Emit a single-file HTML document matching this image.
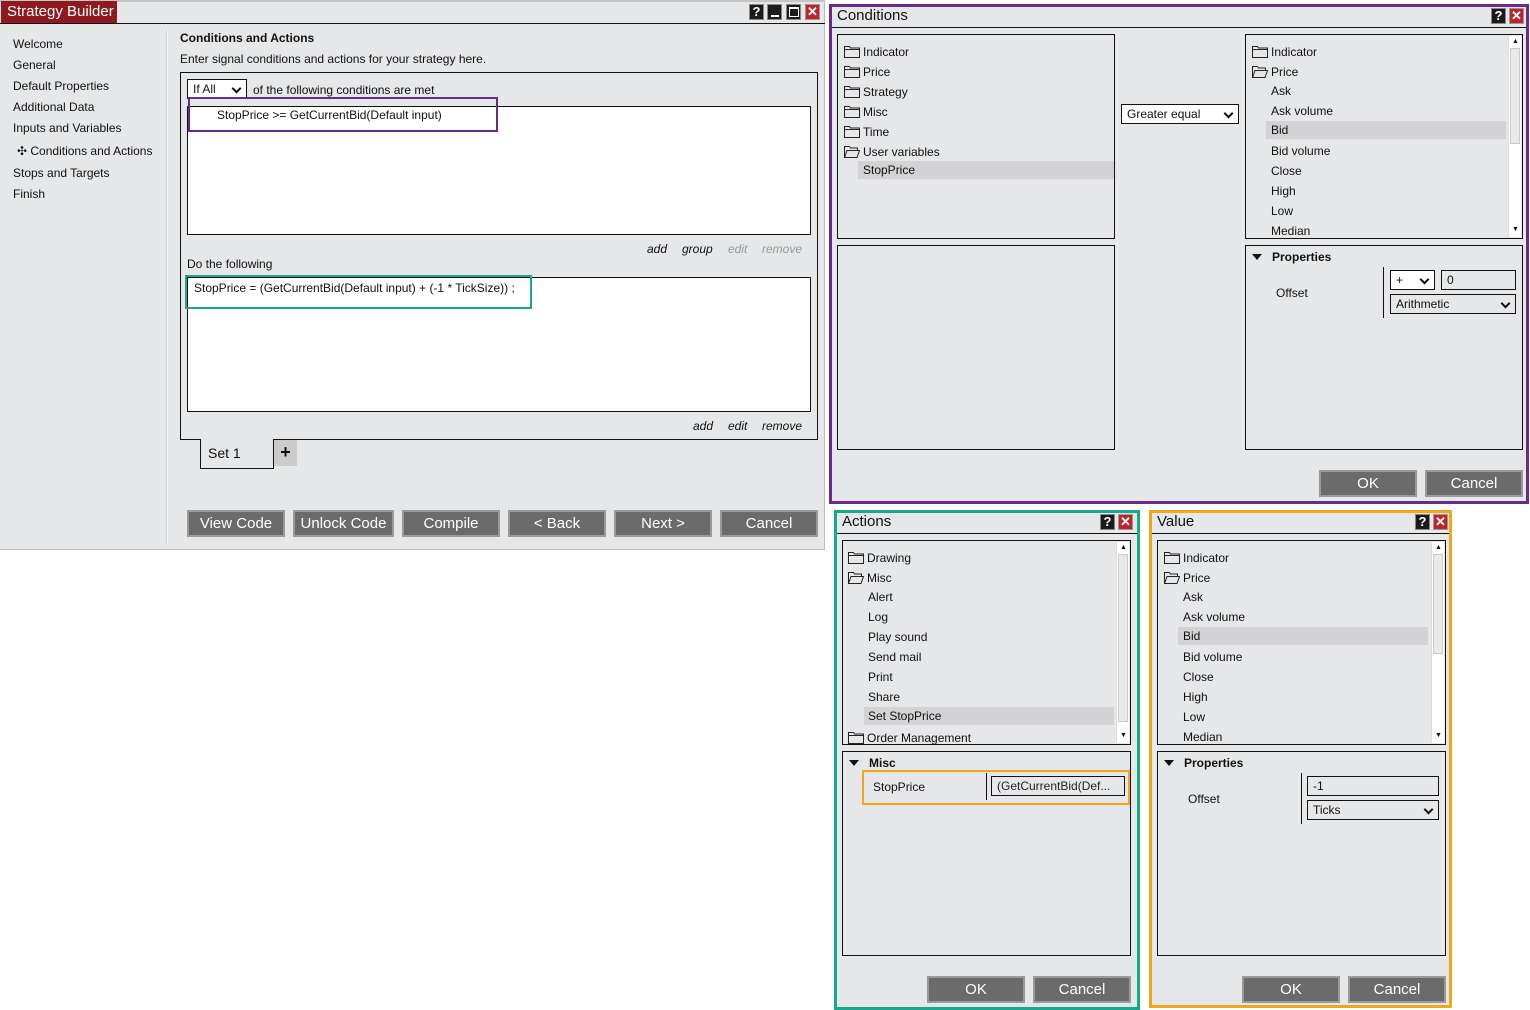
<!DOCTYPE html>
<html><head><meta charset="utf-8"><style>
*{box-sizing:border-box;margin:0;padding:0}
body{width:1530px;height:1010px;background:#fff;position:relative;overflow:hidden;font-family:"Liberation Sans",Arial,sans-serif;font-size:12px;color:#111}
.a{position:absolute}
.bg{background:#e6e7e9}
.box{position:absolute;border:1px solid #111}
.wbox{position:absolute;border:1px solid #111;background:#fff}
.btn{position:absolute;background:#6b6b6b;border:2px solid #9a9a9a;color:#fff;font-size:15px;text-align:center;line-height:23px;height:27px}
.ib{position:absolute;width:15px;height:16px;background:#1b1b1b;border:1px solid #888;color:#fff;font-weight:bold;font-size:13px;text-align:center;line-height:14px}
.ix{background:#c0242b;border-color:#999}
.row{position:absolute;height:18px;line-height:18px;white-space:nowrap}
.sel{background:#d3d3d5}
.fd{display:inline-block;width:16px;height:13px;margin-right:3px;vertical-align:-2px}
.sb{position:absolute;width:13px;background:#fff}
.dd{position:absolute;border:1px solid #111;background:#fff;padding-left:5px;line-height:18px;height:20px;font-size:12px}
.dd:after{content:"";position:absolute;right:6px;top:5px;width:5px;height:5px;border-right:2px solid #111;border-bottom:2px solid #111;transform:rotate(45deg)}
.nodd:after{display:none}
.tri{display:inline-block;width:0;height:0;border-left:5px solid transparent;border-right:5px solid transparent;border-top:6px solid #111;margin-right:10px;vertical-align:1px}
.it{font-style:italic}
</style></head><body>
<svg width="0" height="0" style="position:absolute"><defs>
<symbol id="f" viewBox="0 0 16 13"><path d="M0.5 12.5V1.5H5.5L6.5 3H15.5V12.5Z M0.5 4.5H15.5" fill="none" stroke="#222" stroke-width="1"/></symbol>
<symbol id="fo" viewBox="0 0 16 13"><path d="M0.5 12.5V1.5H5.5L6.5 3H13.5V5.5 M0.5 12.5L3 5.5H15.5L13 12.5Z" fill="none" stroke="#222" stroke-width="1"/></symbol>
</defs></svg>

<!-- MAIN WINDOW -->
<div class="a bg" style="left:0;top:0;width:825px;height:550px;border-right:1px solid #bbb;border-bottom:1px solid #bbb"></div>
<div class="a" style="left:0;top:0;width:825px;height:2px;background:#c5c5c5"></div>
<div class="a" style="left:1px;top:1px;width:116px;height:22px;background:#8e1a1f;color:#fff;font-size:15px;line-height:21px;padding-left:6px">Strategy Builder</div>
<div class="a" style="left:0;top:23px;width:825px;height:1px;background:#111"></div>
<div class="ib" style="left:749px;top:4px">?</div>
<div class="ib" style="left:767px;top:4px"><div class="a" style="left:3px;top:10px;width:8px;height:2px;background:#fff"></div></div>
<div class="ib" style="left:786px;top:4px"><div class="a" style="left:2px;top:2px;width:10px;height:10px;border:1px solid #fff;border-top-width:2px"></div></div>
<div class="ib ix" style="left:805px;top:4px">✕</div>

<div class="a" style="left:166px;top:30px;width:2px;height:514px;background:#f4f4f4;border-left:1px solid #d0d0d0"></div>
<div class="row" style="left:13px;top:35px">Welcome</div>
<div class="row" style="left:13px;top:56px">General</div>
<div class="row" style="left:13px;top:77px">Default Properties</div>
<div class="row" style="left:13px;top:98px">Additional Data</div>
<div class="row" style="left:13px;top:119px">Inputs and Variables</div>
<div class="row" style="left:17px;top:142px">✣ Conditions and Actions</div>
<div class="row" style="left:13px;top:164px">Stops and Targets</div>
<div class="row" style="left:13px;top:185px">Finish</div>

<div class="row" style="left:180px;top:29px;font-weight:bold">Conditions and Actions</div>
<div class="row" style="left:180px;top:50px">Enter signal conditions and actions for your strategy here.</div>

<div class="box" style="left:180px;top:72px;width:638px;height:368px"></div>
<div class="dd" style="left:187px;top:79px;width:60px">If All</div>
<div class="row" style="left:253px;top:81px">of the following conditions are met</div>
<div class="wbox" style="left:187px;top:106px;width:624px;height:129px"></div>
<div class="a" style="left:188px;top:97px;width:310px;height:35px;border:2px solid #6a2a8c"></div>
<div class="row" style="left:217px;top:106px">StopPrice &gt;= GetCurrentBid(Default input)</div>
<div class="row it" style="left:647px;top:240px">add</div>
<div class="row it" style="left:682px;top:240px">group</div>
<div class="row it" style="left:728px;top:240px;color:#999">edit</div>
<div class="row it" style="left:762px;top:240px;color:#999">remove</div>
<div class="row" style="left:187px;top:255px">Do the following</div>
<div class="wbox" style="left:187px;top:277px;width:624px;height:135px"></div>
<div class="a" style="left:185px;top:275px;width:347px;height:34px;border:2px solid #17a88e"></div>
<div class="row" style="left:194px;top:279px">StopPrice = (GetCurrentBid(Default input) + (-1 * TickSize)) ;</div>
<div class="row it" style="left:693px;top:417px">add</div>
<div class="row it" style="left:728px;top:417px">edit</div>
<div class="row it" style="left:762px;top:417px">remove</div>
<div class="a bg" style="left:200px;top:439px;width:74px;height:30px;border:1px solid #111;border-top:none;font-size:14px;padding:6px 0 0 7px">Set 1</div>
<div class="a" style="left:274px;top:440px;width:23px;height:26px;background:#ccc;font-size:18px;font-weight:bold;text-align:center;line-height:25px">+</div>

<div class="btn" style="left:187px;top:510px;width:98px">View Code</div>
<div class="btn" style="left:293px;top:510px;width:101px">Unlock Code</div>
<div class="btn" style="left:402px;top:510px;width:98px">Compile</div>
<div class="btn" style="left:508px;top:510px;width:98px">&lt; Back</div>
<div class="btn" style="left:614px;top:510px;width:98px">Next &gt;</div>
<div class="btn" style="left:720px;top:510px;width:98px">Cancel</div>

<!-- CONDITIONS WINDOW -->
<div class="a bg" style="left:829px;top:4px;width:700px;height:500px;border:3px solid #6a2a8c"></div>
<div class="row" style="left:837px;top:7px;font-size:15px">Conditions</div>
<div class="a" style="left:832px;top:27px;width:694px;height:1px;background:#111"></div>
<div class="ib" style="left:1491px;top:8px">?</div>
<div class="ib ix" style="left:1509px;top:8px">✕</div>

<div class="box" style="left:837px;top:34px;width:278px;height:205px"></div>
<div class="row" style="left:844px;top:43px"><svg class="fd"><use href="#f"/></svg>Indicator</div>
<div class="row" style="left:844px;top:63px"><svg class="fd"><use href="#f"/></svg>Price</div>
<div class="row" style="left:844px;top:83px"><svg class="fd"><use href="#f"/></svg>Strategy</div>
<div class="row" style="left:844px;top:103px"><svg class="fd"><use href="#f"/></svg>Misc</div>
<div class="row" style="left:844px;top:123px"><svg class="fd"><use href="#f"/></svg>Time</div>
<div class="row" style="left:844px;top:143px"><svg class="fd"><use href="#fo"/></svg>User variables</div>
<div class="row sel" style="left:858px;top:161px;width:256px;padding-left:5px">StopPrice</div>
<div class="box" style="left:837px;top:245px;width:278px;height:205px"></div>
<div class="dd" style="left:1121px;top:104px;width:118px">Greater equal</div>

<div class="box" style="left:1245px;top:34px;width:278px;height:205px"></div>
<div class="sb" style="left:1508px;top:36px;height:201px;border-left:1px solid #ddd"><div class="a" style="left:3px;top:2px;font-size:7px">▲</div><div class="a" style="left:3px;top:190px;font-size:7px">▼</div><div class="a" style="left:1px;top:12px;width:10px;height:96px;background:#e9e9e9;border:1px solid #ccc"></div></div>
<div class="row" style="left:1252px;top:43px"><svg class="fd"><use href="#f"/></svg>Indicator</div>
<div class="row" style="left:1252px;top:63px"><svg class="fd"><use href="#fo"/></svg>Price</div>
<div class="row" style="left:1271px;top:82px">Ask</div>
<div class="row" style="left:1271px;top:102px">Ask volume</div>
<div class="row sel" style="left:1266px;top:121px;width:240px;padding-left:5px">Bid</div>
<div class="row" style="left:1271px;top:142px">Bid volume</div>
<div class="row" style="left:1271px;top:162px">Close</div>
<div class="row" style="left:1271px;top:182px">High</div>
<div class="row" style="left:1271px;top:202px">Low</div>
<div class="row" style="left:1271px;top:222px">Median</div>

<div class="box" style="left:1245px;top:245px;width:278px;height:205px"></div>
<div class="row" style="left:1252px;top:248px;font-weight:bold"><span class="tri"></span>Properties</div>
<div class="row" style="left:1276px;top:284px">Offset</div>
<div class="a" style="left:1383px;top:267px;width:1px;height:51px;background:#111"></div>
<div class="dd" style="left:1390px;top:270px;width:45px">+</div>
<div class="dd nodd" style="left:1441px;top:270px;width:75px;background:#e6e7e9">0</div>
<div class="dd" style="left:1390px;top:294px;width:126px;background:#e6e7e9">Arithmetic</div>

<div class="btn" style="left:1319px;top:470px;width:98px">OK</div>
<div class="btn" style="left:1425px;top:470px;width:98px">Cancel</div>

<!-- ACTIONS WINDOW -->
<div class="a bg" style="left:834px;top:510px;width:306px;height:500px;border:3px solid #17a88e"></div>
<div class="row" style="left:842px;top:513px;font-size:15px">Actions</div>
<div class="a" style="left:837px;top:533px;width:300px;height:1px;background:#111"></div>
<div class="ib" style="left:1100px;top:514px">?</div>
<div class="ib ix" style="left:1118px;top:514px">✕</div>
<div class="box" style="left:842px;top:540px;width:289px;height:205px"></div>
<div class="sb" style="left:1116px;top:542px;height:201px;border-left:1px solid #ddd"><div class="a" style="left:3px;top:2px;font-size:7px">▲</div><div class="a" style="left:3px;top:190px;font-size:7px">▼</div><div class="a" style="left:1px;top:12px;width:10px;height:168px;background:#e9e9e9;border:1px solid #ccc"></div></div>
<div class="row" style="left:848px;top:549px"><svg class="fd"><use href="#f"/></svg>Drawing</div>
<div class="row" style="left:848px;top:569px"><svg class="fd"><use href="#fo"/></svg>Misc</div>
<div class="row" style="left:868px;top:588px">Alert</div>
<div class="row" style="left:868px;top:608px">Log</div>
<div class="row" style="left:868px;top:628px">Play sound</div>
<div class="row" style="left:868px;top:648px">Send mail</div>
<div class="row" style="left:868px;top:668px">Print</div>
<div class="row" style="left:868px;top:688px">Share</div>
<div class="row sel" style="left:864px;top:707px;width:250px;padding-left:4px">Set StopPrice</div>
<div class="row" style="left:848px;top:729px"><svg class="fd"><use href="#f"/></svg>Order Management</div>

<div class="box" style="left:842px;top:751px;width:289px;height:205px"></div>
<div class="row" style="left:849px;top:754px;font-weight:bold"><span class="tri"></span>Misc</div>
<div class="a" style="left:862px;top:770px;width:268px;height:35px;border:2px solid #f2a71b"></div>
<div class="row" style="left:873px;top:778px">StopPrice</div>
<div class="a" style="left:986px;top:773px;width:1px;height:27px;background:#111"></div>
<div class="dd nodd" style="left:991px;top:776px;width:134px;background:#e6e7e9;color:#222">(GetCurrentBid(Def...</div>
<div class="btn" style="left:927px;top:976px;width:98px">OK</div>
<div class="btn" style="left:1033px;top:976px;width:98px">Cancel</div>

<!-- VALUE WINDOW -->
<div class="a bg" style="left:1149px;top:510px;width:303px;height:498px;border:3px solid #f2a71b"></div>
<div class="row" style="left:1157px;top:513px;font-size:15px">Value</div>
<div class="a" style="left:1152px;top:533px;width:297px;height:1px;background:#111"></div>
<div class="ib" style="left:1415px;top:514px">?</div>
<div class="ib ix" style="left:1433px;top:514px">✕</div>
<div class="box" style="left:1157px;top:540px;width:289px;height:205px"></div>
<div class="sb" style="left:1431px;top:542px;height:201px;border-left:1px solid #ddd"><div class="a" style="left:3px;top:2px;font-size:7px">▲</div><div class="a" style="left:3px;top:190px;font-size:7px">▼</div><div class="a" style="left:1px;top:12px;width:10px;height:100px;background:#e9e9e9;border:1px solid #ccc"></div></div>
<div class="row" style="left:1164px;top:549px"><svg class="fd"><use href="#f"/></svg>Indicator</div>
<div class="row" style="left:1164px;top:569px"><svg class="fd"><use href="#fo"/></svg>Price</div>
<div class="row" style="left:1183px;top:588px">Ask</div>
<div class="row" style="left:1183px;top:608px">Ask volume</div>
<div class="row sel" style="left:1178px;top:627px;width:250px;padding-left:5px">Bid</div>
<div class="row" style="left:1183px;top:648px">Bid volume</div>
<div class="row" style="left:1183px;top:668px">Close</div>
<div class="row" style="left:1183px;top:688px">High</div>
<div class="row" style="left:1183px;top:708px">Low</div>
<div class="row" style="left:1183px;top:728px">Median</div>

<div class="box" style="left:1157px;top:751px;width:289px;height:205px"></div>
<div class="row" style="left:1164px;top:754px;font-weight:bold"><span class="tri"></span>Properties</div>
<div class="row" style="left:1188px;top:790px">Offset</div>
<div class="a" style="left:1301px;top:773px;width:1px;height:51px;background:#111"></div>
<div class="dd nodd" style="left:1307px;top:776px;width:132px;background:#e6e7e9">-1</div>
<div class="dd" style="left:1307px;top:800px;width:132px;background:#e6e7e9">Ticks</div>

<div class="btn" style="left:1242px;top:976px;width:98px">OK</div>
<div class="btn" style="left:1348px;top:976px;width:98px">Cancel</div>
</body></html>
